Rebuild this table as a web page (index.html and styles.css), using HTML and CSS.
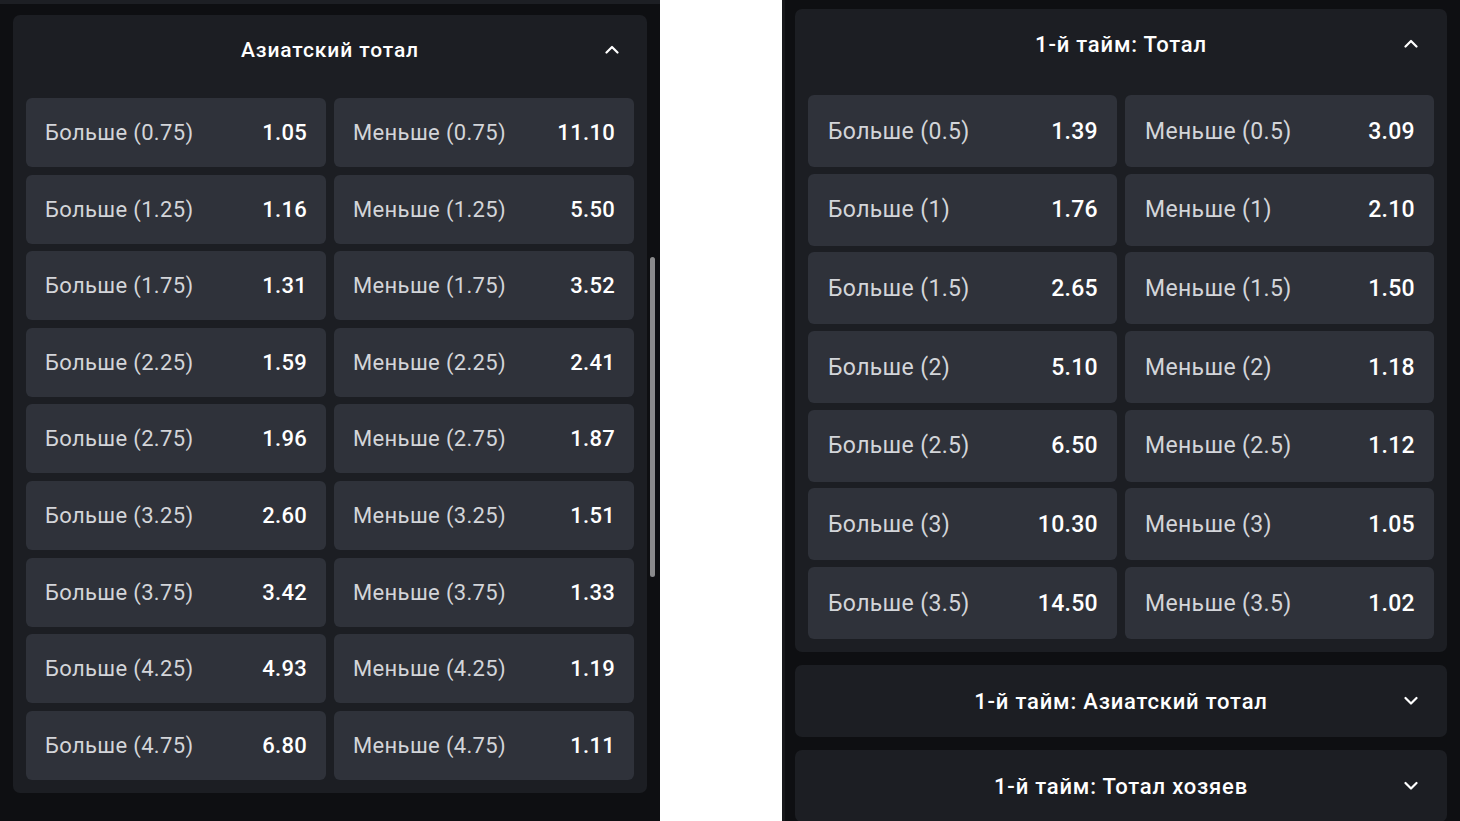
FILE: index.html
```html
<!DOCTYPE html>
<html lang="ru">
<head>
<meta charset="utf-8">
<link rel="stylesheet" href="styles.css">
</head>
<body>
<div class="page">
  <section class="pane pane-left">
    <div class="topstrip"></div>
    <div class="card card-left">
      <div class="card-head">
        <span class="title">Азиатский тотал</span>
        <svg class="chev" viewBox="0 0 14 9"><path d="M1.5 7.5 L7 2 L12.5 7.5"/></svg>
      </div>
      <div class="grid grid-left">
        <div class="cell"><span class="lbl">Больше (0.75)</span><span class="val">1.05</span></div>
        <div class="cell"><span class="lbl">Меньше (0.75)</span><span class="val">11.10</span></div>
        <div class="cell"><span class="lbl">Больше (1.25)</span><span class="val">1.16</span></div>
        <div class="cell"><span class="lbl">Меньше (1.25)</span><span class="val">5.50</span></div>
        <div class="cell"><span class="lbl">Больше (1.75)</span><span class="val">1.31</span></div>
        <div class="cell"><span class="lbl">Меньше (1.75)</span><span class="val">3.52</span></div>
        <div class="cell"><span class="lbl">Больше (2.25)</span><span class="val">1.59</span></div>
        <div class="cell"><span class="lbl">Меньше (2.25)</span><span class="val">2.41</span></div>
        <div class="cell"><span class="lbl">Больше (2.75)</span><span class="val">1.96</span></div>
        <div class="cell"><span class="lbl">Меньше (2.75)</span><span class="val">1.87</span></div>
        <div class="cell"><span class="lbl">Больше (3.25)</span><span class="val">2.60</span></div>
        <div class="cell"><span class="lbl">Меньше (3.25)</span><span class="val">1.51</span></div>
        <div class="cell"><span class="lbl">Больше (3.75)</span><span class="val">3.42</span></div>
        <div class="cell"><span class="lbl">Меньше (3.75)</span><span class="val">1.33</span></div>
        <div class="cell"><span class="lbl">Больше (4.25)</span><span class="val">4.93</span></div>
        <div class="cell"><span class="lbl">Меньше (4.25)</span><span class="val">1.19</span></div>
        <div class="cell"><span class="lbl">Больше (4.75)</span><span class="val">6.80</span></div>
        <div class="cell"><span class="lbl">Меньше (4.75)</span><span class="val">1.11</span></div>
      </div>
    </div>
    <div class="scrollbar"></div>
  </section>
  <div class="gap"></div>
  <section class="pane pane-right">
    <div class="card card-right">
      <div class="card-head head-right">
        <span class="title">1-й тайм: Тотал</span>
        <svg class="chev" viewBox="0 0 14 9"><path d="M1.5 7.5 L7 2 L12.5 7.5"/></svg>
      </div>
      <div class="grid grid-right">
        <div class="cell"><span class="lbl">Больше (0.5)</span><span class="val">1.39</span></div>
        <div class="cell"><span class="lbl">Меньше (0.5)</span><span class="val">3.09</span></div>
        <div class="cell"><span class="lbl">Больше (1)</span><span class="val">1.76</span></div>
        <div class="cell"><span class="lbl">Меньше (1)</span><span class="val">2.10</span></div>
        <div class="cell"><span class="lbl">Больше (1.5)</span><span class="val">2.65</span></div>
        <div class="cell"><span class="lbl">Меньше (1.5)</span><span class="val">1.50</span></div>
        <div class="cell"><span class="lbl">Больше (2)</span><span class="val">5.10</span></div>
        <div class="cell"><span class="lbl">Меньше (2)</span><span class="val">1.18</span></div>
        <div class="cell"><span class="lbl">Больше (2.5)</span><span class="val">6.50</span></div>
        <div class="cell"><span class="lbl">Меньше (2.5)</span><span class="val">1.12</span></div>
        <div class="cell"><span class="lbl">Больше (3)</span><span class="val">10.30</span></div>
        <div class="cell"><span class="lbl">Меньше (3)</span><span class="val">1.05</span></div>
        <div class="cell"><span class="lbl">Больше (3.5)</span><span class="val">14.50</span></div>
        <div class="cell"><span class="lbl">Меньше (3.5)</span><span class="val">1.02</span></div>
      </div>
    </div>
    <div class="card card-collapsed">
      <span class="title">1-й тайм: Азиатский тотал</span>
      <svg class="chev" viewBox="0 0 14 9"><path d="M1.5 2 L7 7.5 L12.5 2"/></svg>
    </div>
    <div class="card card-collapsed">
      <span class="title">1-й тайм: Тотал хозяев</span>
      <svg class="chev" viewBox="0 0 14 9"><path d="M1.5 2 L7 7.5 L12.5 2"/></svg>
    </div>
  </section>
</div>
</body>
</html>
```

FILE: styles.css
```css
* { box-sizing: border-box; }
html, body {
  margin: 0;
  padding: 0;
  width: 1460px;
  height: 821px;
  overflow: hidden;
  background: #ffffff;
  font-family: Roboto, "Noto Sans", "Liberation Sans", sans-serif;
}
.page {
  display: flex;
  width: 1460px;
  height: 821px;
}
.pane {
  background: #0e0f12;
  height: 821px;
  overflow: hidden;
  position: relative;
}
.pane-left {
  width: 660px;
  flex: none;
}
.gap {
  width: 122px;
  flex: none;
  background: #ffffff;
}
.pane-right {
  width: 678px;
  flex: none;
  border-left: 3px solid #17181b;
  padding: 9px 13px 0 10px;
  display: flex;
  flex-direction: column;
  gap: 13px;
}
.topstrip {
  height: 4px;
  background: #1d1f24;
}
.card {
  background: #1c1e23;
  border-radius: 7px;
}
.card-left {
  margin: 11px 13px 0 13px;
  padding: 0 13px 13px;
}
.card-head {
  height: 70px;
  display: flex;
  align-items: center;
  justify-content: center;
  position: relative;
  margin-bottom: 13px;
}
.head-right {
  height: 70px;
  margin-bottom: 16px;
}
.title {
  color: #ffffff;
  font-size: 21px;
  font-weight: 500;
  letter-spacing: 0.9px;
}
.card-right .title,
.card-collapsed .title {
  font-size: 22px;
  letter-spacing: 0.8px;
}
.chev {
  position: absolute;
  right: 15px;
  top: 50%;
  width: 14px;
  height: 9px;
  margin-top: -5px;
  fill: none;
  stroke: #ffffff;
  stroke-width: 2.2;
  stroke-linecap: round;
  stroke-linejoin: round;
}
.card-right .chev { right: 16px; }
.grid {
  display: grid;
  grid-template-columns: 1fr 1fr;
  column-gap: 8px;
}
.grid-left {
  grid-auto-rows: 69px;
  row-gap: 7.6px;
}
.grid-right {
  grid-auto-rows: 72px;
  row-gap: 6.7px;
}
.cell {
  background: #2f323a;
  border-radius: 6px;
  display: flex;
  align-items: center;
  justify-content: space-between;
  padding: 0 19px 0 19px;
}
.lbl {
  color: #d3d5d9;
  font-size: 22px;
  letter-spacing: 0.35px;
}
.val {
  color: #ffffff;
  font-size: 22px;
  font-weight: 500;
  letter-spacing: 0.3px;
}
.grid-right .cell {
  padding: 0 19px 0 20px;
}
.grid-right .lbl {
  font-size: 23px;
  letter-spacing: 0.35px;
}
.grid-right .val {
  font-size: 23px;
  letter-spacing: 0.3px;
}
.card-right {
  padding: 0 13px 13px;
  flex: none;
}
.card-collapsed {
  flex: none;
  height: 72px;
  display: flex;
  align-items: center;
  justify-content: center;
  position: relative;
}
.card-collapsed .chev { right: 29px; }
.scrollbar {
  position: absolute;
  left: 650px;
  top: 257px;
  width: 5px;
  height: 320px;
  border-radius: 3px;
  background: #8a8a8c;
}
```
